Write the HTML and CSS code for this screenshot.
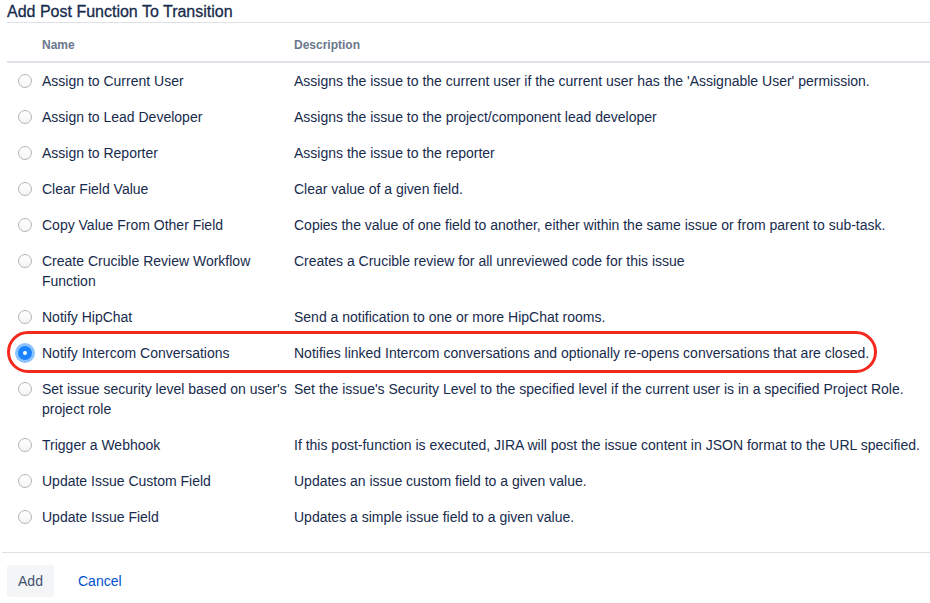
FILE: index.html
```html
<!DOCTYPE html>
<html>
<head>
<meta charset="utf-8">
<link rel="stylesheet" href="styles.css">
</head>
<body>
<div class="dialog">
  <h2 class="title">Add Post Function To Transition</h2>
  <div class="list">
    <div class="row head">
      <div class="c-radio"></div>
      <div class="c-name">Name</div>
      <div class="c-desc">Description</div>
    </div>
    <div class="row"><div class="c-radio"><span class="radio"></span></div><div class="c-name">Assign to Current User</div><div class="c-desc">Assigns the issue to the current user if the current user has the 'Assignable User' permission.</div></div>
    <div class="row"><div class="c-radio"><span class="radio"></span></div><div class="c-name">Assign to Lead Developer</div><div class="c-desc">Assigns the issue to the project/component lead developer</div></div>
    <div class="row"><div class="c-radio"><span class="radio"></span></div><div class="c-name">Assign to Reporter</div><div class="c-desc">Assigns the issue to the reporter</div></div>
    <div class="row"><div class="c-radio"><span class="radio"></span></div><div class="c-name">Clear Field Value</div><div class="c-desc">Clear value of a given field.</div></div>
    <div class="row"><div class="c-radio"><span class="radio"></span></div><div class="c-name">Copy Value From Other Field</div><div class="c-desc">Copies the value of one field to another, either within the same issue or from parent to sub-task.</div></div>
    <div class="row"><div class="c-radio"><span class="radio"></span></div><div class="c-name">Create Crucible Review Workflow Function</div><div class="c-desc">Creates a Crucible review for all unreviewed code for this issue</div></div>
    <div class="row"><div class="c-radio"><span class="radio"></span></div><div class="c-name">Notify HipChat</div><div class="c-desc">Send a notification to one or more HipChat rooms.</div></div>
    <div class="row selected"><div class="c-radio"><span class="radio checked"></span></div><div class="c-name">Notify Intercom Conversations</div><div class="c-desc">Notifies linked Intercom conversations and optionally re-opens conversations that are closed.</div><div class="highlight"></div></div>
    <div class="row"><div class="c-radio"><span class="radio"></span></div><div class="c-name">Set issue security level based on user's project role</div><div class="c-desc">Set the issue's Security Level to the specified level if the current user is in a specified Project Role.</div></div>
    <div class="row"><div class="c-radio"><span class="radio"></span></div><div class="c-name">Trigger a Webhook</div><div class="c-desc">If this post-function is executed, JIRA will post the issue content in JSON format to the URL specified.</div></div>
    <div class="row"><div class="c-radio"><span class="radio"></span></div><div class="c-name">Update Issue Custom Field</div><div class="c-desc">Updates an issue custom field to a given value.</div></div>
    <div class="row"><div class="c-radio"><span class="radio"></span></div><div class="c-name">Update Issue Field</div><div class="c-desc">Updates a simple issue field to a given value.</div></div>
  </div>
  <div class="footer">
    <button class="btn">Add</button>
    <a class="cancel" href="#">Cancel</a>
  </div>
</div>
</body>
</html>
```
FILE: styles.css
```css
* { box-sizing: border-box; }
html, body { margin: 0; padding: 0; background: #fff; }
body {
  font-family: "Liberation Sans", Arial, sans-serif;
  font-size: 14px;
  color: #172b4d;
  width: 930px;
}
.title {
  margin: 0 0 0 7px;
  padding-top: 2px;
  height: 23px;
  font-size: 16px;
  line-height: 20px;
  font-weight: normal;
  color: #172b4d;
  border-bottom: 1px solid #dfe1e6;
  -webkit-text-stroke: 0.3px #172b4d;
}
.list { margin-left: 7px; }
.row {
  position: relative;
  display: grid;
  grid-template-columns: 35px 252px 1fr;
  line-height: 20px;
}
.row > div { padding: 8px 0; }
.c-name { padding-right: 2px !important; }
.row.head > div {
  padding: 14px 0 8px;
  line-height: 16px;
  font-size: 12px;
  font-weight: bold;
  color: #6b778c;
}
.row.head { border-bottom: 2px solid #dfe1e6; }
.c-radio { position: relative; }
.radio {
  position: absolute;
  left: 11px;
  top: 11px;
  width: 14px;
  height: 14px;
  border-radius: 50%;
  border: 1px solid #b5b5b5;
  background: linear-gradient(#fff, #f5f5f5);
}
.radio.checked {
  border: none;
  background: #1a82ff;
  box-shadow: 0 0 0 3px #8cc2ff;
}
.radio.checked::after {
  content: "";
  position: absolute;
  left: 5px;
  top: 5px;
  width: 4px;
  height: 4px;
  border-radius: 50%;
  background: #fff;
}
.highlight {
  position: absolute;
  left: 0;
  top: -4px;
  width: 870px;
  height: 42px;
  border: 3px solid #f3291e;
  border-radius: 21px;
  padding: 0 !important;
  pointer-events: none;
}
.footer {
  margin: 17px 0 0 2px;
  border-top: 1px solid #dfe1e6;
  padding: 12px 0 0 5px;
  display: flex;
  align-items: center;
}
.btn {
  font-family: inherit;
  font-size: 14px;
  color: #42526e;
  background: #f4f5f7;
  border: none;
  border-radius: 3px;
  height: 32px;
  width: 47px;
  padding: 0;
}
.cancel {
  margin-left: 24px;
  color: #0052cc;
  text-decoration: none;
}
```
